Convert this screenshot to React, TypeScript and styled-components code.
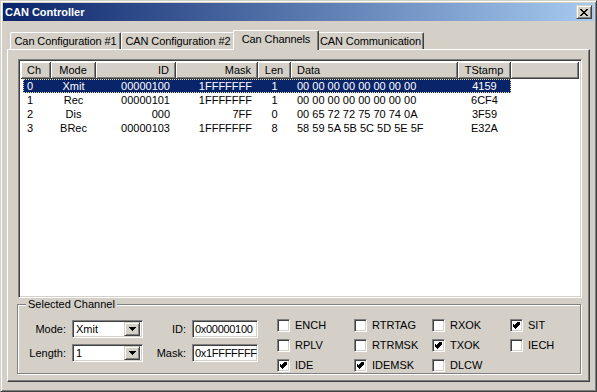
import * as React from "react";
import styled, { createGlobalStyle, css } from "styled-components";

const GlobalStyle = createGlobalStyle`
  html, body {
    margin: 0;
    padding: 0;
    background: #d4d0c8;
  }
  body {
    font-family: "Liberation Sans", Arial, sans-serif;
    font-size: 11px;
    color: #000;
  }
`;

const raised = css`
  border: 1px solid;
  border-color: #d4d0c8 #404040 #404040 #d4d0c8;
  box-shadow: inset 1px 1px 0 #fff, inset -1px -1px 0 #808080;
`;

const sunken = css`
  border: 1px solid;
  border-color: #808080 #fff #fff #808080;
  box-shadow: inset 1px 1px 0 #404040, inset -1px -1px 0 #d4d0c8;
`;

const Window = styled.div`
  ${raised};
  width: 597px;
  height: 392px;
  box-sizing: border-box;
  padding: 2px;
  display: flex;
  flex-direction: column;
  background: #d4d0c8;
`;

const TitleBar = styled.div`
  height: 18px;
  flex: none;
  display: flex;
  align-items: center;
  justify-content: space-between;
  padding: 0 2px;
  background: linear-gradient(to right, #0a246a, #a6caf0);
`;

const Title = styled.span`
  color: #fff;
  font-weight: bold;
  font-size: 11px;
`;

const CloseButton = styled.div`
  ${raised};
  width: 16px;
  height: 14px;
  box-sizing: border-box;
  background: #d4d0c8;
  display: flex;
  align-items: center;
  justify-content: center;
`;

const Client = styled.div`
  flex: 1;
  display: flex;
  flex-direction: column;
  padding: 9px 4px 7px 4px;
`;

const TabStrip = styled.div`
  height: 19px;
  display: flex;
  align-items: flex-end;
  padding-left: 3px;
`;

const Tab = styled.div<{ $w: number; $active?: boolean }>`
  width: ${(p) => (p.$active ? p.$w + 4 : p.$w)}px;
  height: ${(p) => (p.$active ? 20 : 17)}px;
  margin: 0 ${(p) => (p.$active ? -2 : 0)}px ${(p) => (p.$active ? -1 : 0)}px;
  box-sizing: border-box;
  position: relative;
  z-index: ${(p) => (p.$active ? 2 : 1)};
  background: #d4d0c8;
  border-top: 1px solid #fff;
  border-left: 1px solid #fff;
  border-right: 1px solid #404040;
  border-radius: 2px 2px 0 0;
  box-shadow: inset -1px 0 0 #808080;
  display: flex;
  align-items: ${(p) => (p.$active ? "flex-start" : "center")};
  padding-top: ${(p) => (p.$active ? 2 : 0)}px;
  justify-content: center;
  white-space: nowrap;
  line-height: 13px;
  letter-spacing: -0.1px;
`;

const Panel = styled.div`
  flex: 1;
  border: 1px solid;
  border-color: #fff #404040 #404040 #fff;
  box-shadow: inset -1px -1px 0 #808080;
  padding: 9px 7px 0 10px;
  display: flex;
  flex-direction: column;
`;

const ListView = styled.div`
  ${sunken};
  height: 239px;
  box-sizing: border-box;
  background: #fff;
  padding: 2px;
  overflow: hidden;
`;

const HeaderRow = styled.div`
  display: flex;
  height: 17px;
`;

type Align = "left" | "center" | "right";

const HeaderCell = styled.div<{ $w?: number; $align: Align }>`
  ${(p) => (p.$w ? `width: ${p.$w}px;` : "flex: 1;")}
  box-sizing: border-box;
  background: #d4d0c8;
  border-right: 1px solid #404040;
  border-bottom: 1px solid #404040;
  box-shadow: inset 1px 1px 0 #fff, inset -1px -1px 0 #808080;
  padding: 0 6px;
  line-height: 16px;
  text-align: ${(p) => p.$align};
  white-space: nowrap;
`;

const Row = styled.div<{ $selected?: boolean }>`
  display: flex;
  height: 14px;
  width: 488px;
  margin-left: 2px;
  box-sizing: border-box;
  line-height: 14px;
  background: ${(p) => (p.$selected ? "#0a246a" : "transparent")};
  color: ${(p) => (p.$selected ? "#fff" : "#000")};
  outline: ${(p) => (p.$selected ? "1px dotted #e8e4a8" : "none")};
  outline-offset: -1px;
`;

const Cell = styled.div<{ $w: number; $align: Align; $pad?: number }>`
  width: ${(p) => p.$w}px;
  box-sizing: border-box;
  padding: 0 6px 0 ${(p) => p.$pad ?? 6}px;
  text-align: ${(p) => p.$align};
  white-space: nowrap;
  overflow: hidden;
`;

const GroupBox = styled.div`
  position: relative;
  margin: 6px 0 0 -1px;
  width: 564px;
  height: 70px;
  box-sizing: border-box;
  border: 1px solid #808080;
  box-shadow: 1px 1px 0 #fff, inset 1px 1px 0 #fff;
  padding-top: 12px;
  display: flex;
  align-items: flex-start;
`;

const Legend = styled.span`
  position: absolute;
  top: -7px;
  left: 8px;
  padding: 0 2px;
  background: #d4d0c8;
  line-height: 13px;
`;

const Fields = styled.div`
  margin-top: 3px;
  flex: none;
  display: grid;
  grid-template-columns: 54px 71px 49px 66px;
  grid-auto-rows: 18px;
  row-gap: 6px;
  align-items: center;
`;

const FieldLabel = styled.span`
  text-align: right;
  padding-right: 6px;
  white-space: nowrap;
`;

const Combo = styled.div`
  ${sunken};
  height: 18px;
  box-sizing: border-box;
  background: #fff;
  padding: 2px;
  display: flex;
  align-items: center;
  justify-content: space-between;
`;

const ComboText = styled.span`
  padding-left: 1px;
  line-height: 14px;
`;

const DropButton = styled.div`
  ${raised};
  width: 16px;
  height: 14px;
  box-sizing: border-box;
  background: #d4d0c8;
  display: flex;
  align-items: center;
  justify-content: center;
`;

const TextBox = styled.div`
  ${sunken};
  height: 18px;
  box-sizing: border-box;
  background: #fff;
  padding: 0 2px;
  line-height: 16px;
  letter-spacing: -0.3px;
  white-space: nowrap;
  overflow: hidden;
`;

const Checks = styled.div`
  margin-left: 19px;
  display: grid;
  grid-template-columns: 77px 78px 78px auto;
  grid-auto-rows: 16px;
  row-gap: 4px;
`;

const CheckItem = styled.label`
  display: flex;
  align-items: center;
  gap: 5px;
  white-space: nowrap;
`;

const CheckBox = styled.span`
  ${sunken};
  width: 13px;
  height: 13px;
  box-sizing: border-box;
  background: #fff;
  display: flex;
  align-items: center;
  justify-content: center;
`;

const columns: { key: string; title: string; w: number; align: Align }[] = [
  { key: "ch", title: "Ch", w: 30, align: "left" },
  { key: "mode", title: "Mode", w: 45, align: "center" },
  { key: "id", title: "ID", w: 80, align: "right" },
  { key: "mask", title: "Mask", w: 82, align: "right" },
  { key: "len", title: "Len", w: 33, align: "center" },
  { key: "data", title: "Data", w: 167, align: "left" },
  { key: "ts", title: "TStamp", w: 53, align: "center" },
];

const rows: Record<string, string>[] = [
  { ch: "0", mode: "Xmit", id: "00000100", mask: "1FFFFFFF", len: "1", data: "00 00 00 00 00 00 00 00", ts: "4159" },
  { ch: "1", mode: "Rec", id: "00000101", mask: "1FFFFFFF", len: "1", data: "00 00 00 00 00 00 00 00", ts: "6CF4" },
  { ch: "2", mode: "Dis", id: "000", mask: "7FF", len: "0", data: "00 65 72 72 75 70 74 0A", ts: "3F59" },
  { ch: "3", mode: "BRec", id: "00000103", mask: "1FFFFFFF", len: "8", data: "58 59 5A 5B 5C 5D 5E 5F", ts: "E32A" },
];

const flags: { label: string; checked: boolean }[] = [
  { label: "ENCH", checked: false },
  { label: "RTRTAG", checked: false },
  { label: "RXOK", checked: false },
  { label: "SIT", checked: true },
  { label: "RPLV", checked: false },
  { label: "RTRMSK", checked: false },
  { label: "TXOK", checked: true },
  { label: "IECH", checked: false },
  { label: "IDE", checked: true },
  { label: "IDEMSK", checked: true },
  { label: "DLCW", checked: false },
];

const tabs = [
  { title: "Can Configuration #1", w: 111 },
  { title: "CAN Configuration #2", w: 114 },
  { title: "Can Channels", w: 82, active: true },
  { title: "CAN Communication", w: 107 },
];

const CloseIcon = () => (
  <svg width="8" height="7" viewBox="0 0 8 7" shapeRendering="crispEdges">
    <path
      d="M0 0h2v1h1v1h2v-1h1v-1h2v1h-1v1h-1v1h-1v1h1v1h1v1h1v1h-2v-1h-1v-1h-2v1h-1v1h-2v-1h1v-1h1v-1h1v-1h-1v-1h-1v-1h-1z"
      fill="#000"
    />
  </svg>
);

const DownArrow = () => (
  <svg width="7" height="4" viewBox="0 0 7 4" shapeRendering="crispEdges">
    <path d="M0 0h7v1h-1v1h-1v1h-1v1h-1v-1h-1v-1h-1v-1h-1z" fill="#000" />
  </svg>
);

const Tick = () => (
  <svg width="7" height="7" viewBox="0 0 7 7" shapeRendering="crispEdges">
    <path d="M6 0h1v3h-1v1h-1v1h-1v1h-1v1h-1v-1h-1v-1h-1v-1h-1v-3h1v1h1v1h1v-1h1v-1h1v-1h1z" fill="#000" />
  </svg>
);

const ComboBox = ({ value }: { value: string }) => (
  <Combo>
    <ComboText>{value}</ComboText>
    <DropButton>
      <DownArrow />
    </DropButton>
  </Combo>
);

export default function App() {
  return (
    <>
      <GlobalStyle />
      <Window>
        <TitleBar>
          <Title>CAN Controller</Title>
          <CloseButton>
            <CloseIcon />
          </CloseButton>
        </TitleBar>
        <Client>
          <TabStrip>
            {tabs.map((t) => (
              <Tab key={t.title} $w={t.w} $active={t.active}>
                {t.title}
              </Tab>
            ))}
          </TabStrip>
          <Panel>
            <ListView>
              <HeaderRow>
                {columns.map((c) => (
                  <HeaderCell key={c.key} $w={c.w} $align={c.align}>
                    {c.title}
                  </HeaderCell>
                ))}
                <HeaderCell $align="left" />
              </HeaderRow>
              {rows.map((r, i) => (
                <Row key={r.ch} $selected={i === 0}>
                  {columns.map((c, j) => (
                    <Cell
                      key={c.key}
                      $w={j === 0 ? c.w - 2 : c.w}
                      $align={c.align}
                      $pad={j === 0 ? 4 : 6}
                    >
                      {r[c.key]}
                    </Cell>
                  ))}
                </Row>
              ))}
            </ListView>
            <GroupBox>
              <Legend>Selected Channel</Legend>
              <Fields>
                <FieldLabel>Mode:</FieldLabel>
                <ComboBox value="Xmit" />
                <FieldLabel>ID:</FieldLabel>
                <TextBox>0x00000100</TextBox>
                <FieldLabel>Length:</FieldLabel>
                <ComboBox value="1" />
                <FieldLabel>Mask:</FieldLabel>
                <TextBox>0x1FFFFFFF</TextBox>
              </Fields>
              <Checks>
                {flags.map((f) => (
                  <CheckItem key={f.label}>
                    <CheckBox>{f.checked && <Tick />}</CheckBox>
                    {f.label}
                  </CheckItem>
                ))}
              </Checks>
            </GroupBox>
          </Panel>
        </Client>
      </Window>
    </>
  );
}
